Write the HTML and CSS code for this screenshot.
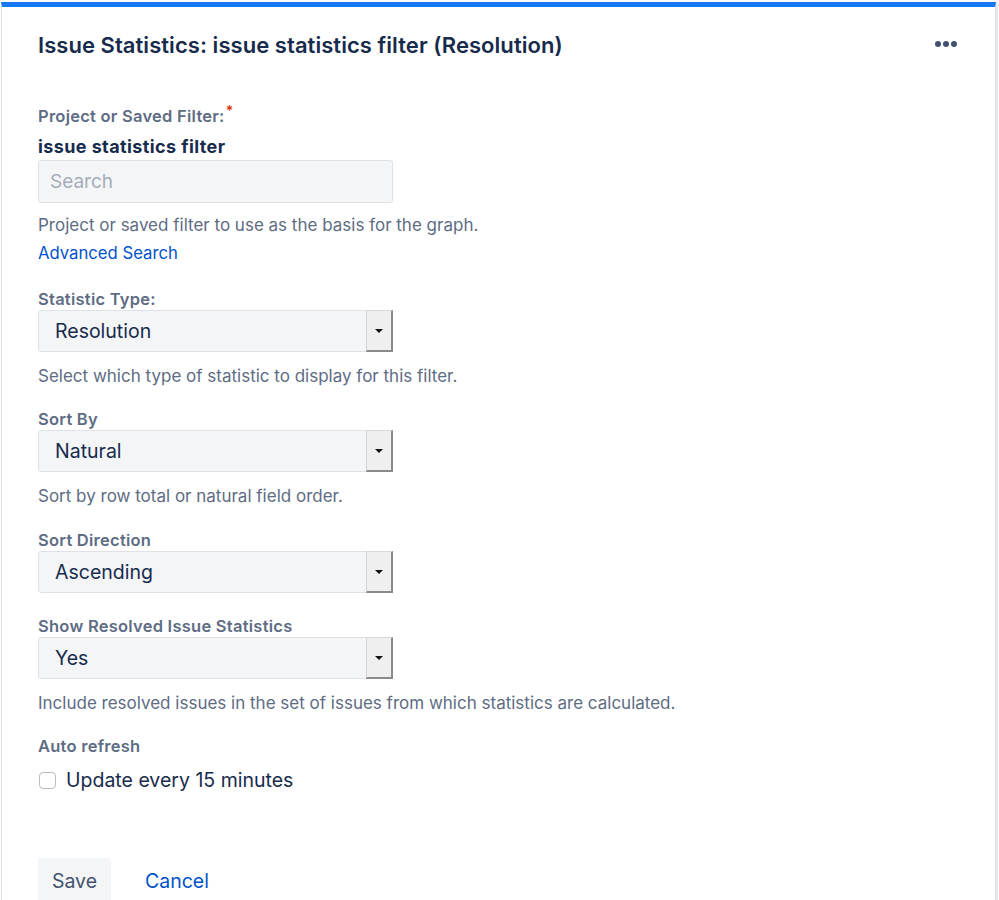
FILE: index.html
```html
<!DOCTYPE html>
<html>
<head>
<meta charset="utf-8">
<link rel="stylesheet" href="styles.css">
</head>
<body>
<div class="card">
  <div class="card-head">
    <h1 class="title">Issue Statistics: issue statistics filter (Resolution)</h1>
    <div class="more"><span></span><span></span><span></span></div>
  </div>
  <form class="form">
    <div class="group first">
      <div class="label">Project or Saved Filter:<span class="req">*</span></div>
      <div class="value">issue statistics filter</div>
      <div class="input">Search</div>
      <div class="help help-tight">Project or saved filter to use as the basis for the graph.</div>
      <a class="link">Advanced Search</a>
    </div>
    <div class="group">
      <div class="label">Statistic Type:</div>
      <div class="select"><span class="sel-text">Resolution</span><span class="sel-btn"><span class="tri"></span></span></div>
      <div class="help">Select which type of statistic to display for this filter.</div>
    </div>
    <div class="group wide">
      <div class="label">Sort By</div>
      <div class="select"><span class="sel-text">Natural</span><span class="sel-btn"><span class="tri"></span></span></div>
      <div class="help">Sort by row total or natural field order.</div>
    </div>
    <div class="group">
      <div class="label">Sort Direction</div>
      <div class="select"><span class="sel-text">Ascending</span><span class="sel-btn"><span class="tri"></span></span></div>
    </div>
    <div class="group">
      <div class="label">Show Resolved Issue Statistics</div>
      <div class="select"><span class="sel-text">Yes</span><span class="sel-btn"><span class="tri"></span></span></div>
      <div class="help">Include resolved issues in the set of issues from which statistics are calculated.</div>
    </div>
    <div class="group">
      <div class="label">Auto refresh</div>
      <label class="check"><span class="box"></span><span class="check-text">Update every 15 minutes</span></label>
    </div>
    <div class="actions">
      <span class="btn">Save</span>
      <a class="cancel">Cancel</a>
    </div>
  </form>
</div>
</body>
</html>
```

FILE: styles.css
```css
html, body {
  margin: 0;
  padding: 0;
  background: #ffffff;
}
body {
  font-family: Inter, "Liberation Sans", Arial, sans-serif;
  color: #172B4D;
  padding: 2px 3px 0 1px;
  overflow: hidden;
}
.card {
  border-top: 5px solid #1678f2;
  border-left: 1px solid #dfe1e6;
  border-right: 1px solid #dfe1e6;
  box-shadow: 2px 0 2px rgba(9, 30, 66, 0.12);
  min-height: 900px;
  padding: 0 36px;
  box-sizing: border-box;
}
.card-head {
  display: flex;
  align-items: center;
  justify-content: space-between;
  height: 76px;
}
.title {
  margin: 0;
  font-size: 22px;
  font-weight: 600;
  color: #172B4D;
  letter-spacing: 0.05px;
}
.more {
  display: flex;
  gap: 2px;
  margin-right: 2px;
  margin-top: -2px;
}
.more span {
  width: 6px;
  height: 6px;
  border-radius: 50%;
  background: #42526E;
}
.form {
  padding-top: 19px;
}
.group {
  margin-bottom: 24px;
}
.group.first {
  margin-bottom: 27px;
}
.group.wide {
  margin-bottom: 25px;
}
.label {
  font-size: 16.5px;
  font-weight: 600;
  color: #5E6C84;
  line-height: 18px;
  letter-spacing: 0.25px;
  margin-bottom: 2px;
}
.first .label {
  margin-bottom: 0;
}
.req {
  color: #DE350B;
  font-size: 14px;
  vertical-align: 6px;
  margin-left: 1px;
}
.value {
  font-size: 18px;
  font-weight: 700;
  color: #172B4D;
  line-height: 22px;
  letter-spacing: 0.4px;
  margin-top: 11px;
  margin-bottom: 2px;
}
.input {
  width: 355px;
  height: 43px;
  box-sizing: border-box;
  background: #F4F5F7;
  border: 1px solid #DFE1E6;
  border-radius: 3px;
  font-size: 19px;
  color: #A5ADBA;
  padding-left: 11px;
  display: flex;
  align-items: center;
}
.help {
  font-size: 17px;
  color: #5E6C84;
  line-height: 20px;
  margin-top: 14px;
}
.help-tight {
  margin-top: 12px;
}
.link {
  display: block;
  font-size: 16.7px;
  color: #0052CC;
  line-height: 20px;
  margin-top: 8px;
}
.select {
  width: 355px;
  height: 42px;
  box-sizing: border-box;
  background: #F4F5F7;
  border: 1px solid #DFE1E6;
  border-radius: 3px;
  display: flex;
  align-items: stretch;
}
.sel-text {
  flex: 1;
  display: flex;
  align-items: center;
  padding-left: 16px;
  font-size: 19.5px;
  color: #172B4D;
}
.sel-btn {
  width: 24px;
  background: #efefef;
  border-left: 1px solid #d2d2d2;
  border-top: 1px solid #d8d8d8;
  border-right: 2px solid #8a8a8a;
  border-bottom: 2px solid #8a8a8a;
  margin: -1px -1px -1px 0;
  display: flex;
  align-items: center;
  justify-content: center;
}
.tri {
  width: 0;
  height: 0;
  border-left: 4px solid transparent;
  border-right: 4px solid transparent;
  border-top: 4px solid #111;
}
.check {
  display: flex;
  align-items: center;
  gap: 10px;
  margin-top: 13px;
}
.box {
  width: 17px;
  height: 17px;
  border: 1px solid #b9bcc2;
  border-radius: 4px;
  background: #fff;
  margin-left: 1px;
  box-sizing: border-box;
}
.check-text {
  font-size: 19.5px;
  color: #172B4D;
  line-height: 24px;
}
.actions {
  display: flex;
  align-items: center;
  gap: 34px;
  margin-top: 66px;
}
.btn {
  display: inline-flex;
  align-items: center;
  justify-content: center;
  width: 73px;
  height: 46px;
  background: #F4F5F7;
  border-radius: 3px;
  font-size: 19.5px;
  color: #42526E;
}
.cancel {
  font-size: 19.5px;
  color: #0052CC;
}
```
